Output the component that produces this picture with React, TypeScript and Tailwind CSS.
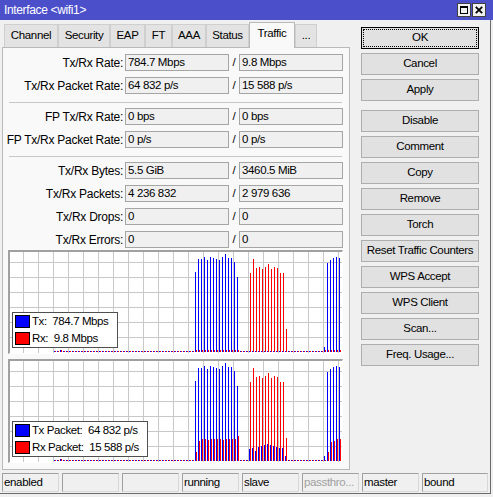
import React from "react";

const N = 96;

const fill = (v: number) => Array.from({ length: N }, () => v);
const put = (arr: number[], start: number, vals: number[]) => {
  vals.forEach((v, i) => (arr[start + i] = v));
  return arr;
};

// bar heights, one sample every 3px
const txTall = [80, 93, 93, 95, 92, 95, 94, 93, 92, 95, 98, 94, 94, 90, 75];
const rxTall = [79, 93, 84, 85, 83, 85, 88, 83, 85, 84, 79, 79, 23];
const txRight = [5, 89, 92, 94, 95, 94];

const rateTx = put(put(put(fill(1), 2, [2]), 47, txTall), 90, txRight);
const rateRx = put(put(put(put(fill(1), 2, [2]), 47, Array(15).fill(2)), 65, rxTall), 90, Array(6).fill(2));

const pktTx = put(put(put(put(fill(1), 2, [2]), 47, txTall), 65, [12, 13, 10, 14, 15, 16, 17, 16, 15, 14, 13, 13, 5]), 90, txRight);
const pktRx = put(
  put(
    put(put(fill(1), 2, [2]), 47, [9, 20, 22, 22, 21, 22, 22, 22, 22, 21, 22, 22, 22, 22, 25]),
    65,
    rxTall
  ),
  91,
  [9, 19, 20, 22, 22]
);

interface LegendRow {
  color: string;
  label: string;
  value: string;
}

function Chart({ tx, rx, legend, legendW }: { tx: number[]; rx: number[]; legend: LegendRow[]; legendW: string }) {
  return (
    <div className="ml-[5px] w-[335px] border-t-2 border-l-2 border-r border-b border-t-[#a0a0a0] border-l-[#a0a0a0] border-r-white border-b-white">
      <div className="relative w-[332px] h-[101px] bg-white">
        <svg width="332" height="101" className="block" shapeRendering="crispEdges">
          {Array.from({ length: 22 }, (_, n) => (
            <rect key={"v" + n} x={13 + 15 * n} y={0} width={1} height={101} fill="#c8c8c8" />
          ))}
          {[85, 70, 55, 40, 25, 10].map((y) => (
            <rect key={"h" + y} x={0} y={y} width={332} height={1} fill="#c8c8c8" />
          ))}
          {tx.map((h, k) => (
            <rect key={"t" + k} x={44 + 3 * k} y={100 - h} width={1} height={h} fill="#0000ff" />
          ))}
          {rx.map((h, k) => (
            <rect key={"r" + k} x={45 + 3 * k} y={100 - h} width={1} height={h} fill="#ff0000" />
          ))}
        </svg>
        <div className={`absolute left-[2px] bottom-[5px] ${legendW} border border-[#505050] bg-white px-[2px] py-[2px] flex flex-col gap-[4px]`}>
          {legend.map((r) => (
            <div key={r.label} className="flex items-center h-[13px]">
              <div className={`w-[15px] h-[13px] border border-black ${r.color}`} />
              <span className="ml-[2px] whitespace-pre text-[11.5px] tracking-[-0.4px]">{r.label + "  " + r.value}</span>
            </div>
          ))}
        </div>
      </div>
    </div>
  );
}

function Row({ label, a, b }: { label: string; a: string; b: string }) {
  return (
    <div className="flex items-center h-[17px]">
      <div className="w-[120px] text-right whitespace-nowrap text-[12px] tracking-[-0.25px]">{label}</div>
      <div className="ml-[2px] w-[104px] h-[17px] border border-[#a5a5a5] bg-[#f0f0f0] pl-[2px] flex items-center">{a}</div>
      <div className="w-[10px] text-center">/</div>
      <div className="w-[104px] h-[17px] border border-[#a5a5a5] bg-[#f0f0f0] pl-[2px] flex items-center">{b}</div>
    </div>
  );
}

const tabs = [
  { label: "Channel", w: "w-[54px]" },
  { label: "Security", w: "w-[52px]" },
  { label: "EAP", w: "w-[35px]" },
  { label: "FT", w: "w-[27px]" },
  { label: "AAA", w: "w-[34px]" },
  { label: "Status", w: "w-[43px]" },
  { label: "Traffic", w: "w-[46px]", active: true },
  { label: "...", w: "w-[22px]" },
];

const topButtons = ["OK", "Cancel", "Apply"];
const moreButtons = [
  "Disable",
  "Comment",
  "Copy",
  "Remove",
  "Torch",
  "Reset Traffic Counters",
  "WPS Accept",
  "WPS Client",
  "Scan...",
  "Freq. Usage...",
];

const status = [
  { t: "enabled", w: "w-[57px]" },
  { t: "", w: "w-[57px]" },
  { t: "", w: "w-[57px]" },
  { t: "running", w: "w-[57px]" },
  { t: "slave", w: "w-[57px]" },
  { t: "passthro...", w: "w-[57px]", dim: true },
  { t: "master", w: "w-[57px]" },
  { t: "bound", w: "w-[66px]" },
];

export default function App() {
  return (
    <div className="w-[493px] h-[497px] bg-[#f0f0f0] overflow-hidden font-['Liberation_Sans',Arial,sans-serif] text-[11.5px] tracking-[-0.35px] leading-none text-black">
      {/* Title bar */}
      <div className="h-[20px] bg-[#4b4fca] flex items-center justify-between pl-[4px] pr-[7px]">
        <span className="text-white text-[12px]">{"Interface <wifi1>"}</span>
        <div className="flex gap-[1px]">
          <div className="w-[14px] h-[14px] bg-[#f0f0f0] border border-[#404040] flex items-center justify-center">
            <svg width="8" height="8" viewBox="0 0 8 8" shapeRendering="crispEdges">
              <rect x="0.5" y="0.5" width="7" height="7" fill="none" stroke="#000" />
              <rect x="0" y="0" width="8" height="2" fill="#000" />
            </svg>
          </div>
          <div className="w-[14px] h-[14px] bg-[#f0f0f0] border border-[#404040] flex items-center justify-center">
            <svg width="8" height="8" viewBox="0 0 8 8">
              <path d="M0.8 0.8 L7.2 7.2 M7.2 0.8 L0.8 7.2" stroke="#000" strokeWidth="1.8" />
            </svg>
          </div>
        </div>
      </div>

      {/* Window body */}
      <div className="w-[491px] h-[474px] border-r border-b border-[#6b6b6b] flex flex-col">
        <div className="flex h-[450px]">
          {/* Left: tabs + panel */}
          <div className="ml-[2px] w-[348px] pt-[2px] flex flex-col">
            <div className="h-[25px] pl-[2px] flex items-end">
              {tabs.map((t) =>
                t.active ? (
                  <div
                    key={t.label}
                    className={`${t.w} h-[26px] -mb-px relative z-10 bg-[#f9f9f9] border-l border-t border-r border-[#b9b9b9] flex items-center justify-center pb-[3px]`}
                  >
                    {t.label}
                  </div>
                ) : (
                  <div
                    key={t.label}
                    className={`${t.w} h-[23px] bg-[#e3e3e3] border-l border-t border-r border-[#cfcfcf] flex items-center justify-center`}
                  >
                    {t.label}
                  </div>
                )
              )}
            </div>
            <div className="h-[423px] border border-[#b9b9b9] bg-[#f9f9f9] flex flex-col pt-[6px]">
              <Row label="Tx/Rx Rate:" a="784.7 Mbps" b="9.8 Mbps" />
              <div className="mt-[6px]">
                <Row label="Tx/Rx Packet Rate:" a="64 832 p/s" b="15 588 p/s" />
              </div>
              <div className="mt-[8px] ml-[6px] w-[333px] h-px bg-[#c8c8c8]" />
              <div className="mt-[5px]">
                <Row label="FP Tx/Rx Rate:" a="0 bps" b="0 bps" />
              </div>
              <div className="mt-[6px]">
                <Row label="FP Tx/Rx Packet Rate:" a="0 p/s" b="0 p/s" />
              </div>
              <div className="mt-[8px] ml-[6px] w-[333px] h-px bg-[#c8c8c8]" />
              <div className="mt-[5px] flex flex-col gap-[6px]">
                <Row label="Tx/Rx Bytes:" a="5.5 GiB" b="3460.5 MiB" />
                <Row label="Tx/Rx Packets:" a="4 236 832" b="2 979 636" />
                <Row label="Tx/Rx Drops:" a="0" b="0" />
                <Row label="Tx/Rx Errors:" a="0" b="0" />
              </div>
              <div className="mt-[2px]">
                <Chart
                  tx={rateTx}
                  rx={rateRx}
                  legendW="w-[106px]"
                  legend={[
                    { color: "bg-[#0000ff]", label: "Tx:", value: "784.7 Mbps" },
                    { color: "bg-[#ff0000]", label: "Rx:", value: "9.8 Mbps" },
                  ]}
                />
              </div>
              <div className="mt-[5px]">
                <Chart
                  tx={pktTx}
                  rx={pktRx}
                  legendW="w-[136px]"
                  legend={[
                    { color: "bg-[#0000ff]", label: "Tx Packet:", value: "64 832 p/s" },
                    { color: "bg-[#ff0000]", label: "Rx Packet:", value: "15 588 p/s" },
                  ]}
                />
              </div>
            </div>
          </div>

          {/* Right: buttons */}
          <div className="ml-[11px] w-[118px] pt-[7px] flex flex-col">
            <div className="flex flex-col gap-[4px]">
              {topButtons.map((b) => (
                <div
                  key={b}
                  className={
                    b === "OK"
                      ? "h-[22px] bg-[#e1e1e1] border border-black outline-1 outline-dotted outline-black outline-offset-[-3px] flex items-center justify-center"
                      : "h-[22px] bg-[#e1e1e1] border border-[#adadad] flex items-center justify-center"
                  }
                >
                  {b}
                </div>
              ))}
            </div>
            <div className="mt-[9px] flex flex-col gap-[4px]">
              {moreButtons.map((b) => (
                <div key={b} className="h-[22px] bg-[#e1e1e1] border border-[#adadad] flex items-center justify-center whitespace-nowrap">
                  {b}
                </div>
              ))}
            </div>
          </div>
        </div>

        {/* Status bar */}
        <div className="mt-[3px] pl-[2px] flex gap-[3px]">
          {status.map((s, i) => (
            <div
              key={i}
              className={`${s.w} h-[19px] border border-t-[#a0a0a0] border-l-[#a0a0a0] border-r-[#d8d8d8] border-b-[#d8d8d8] pl-[1px] flex items-center ${
                s.dim ? "text-[#a0a0a0]" : ""
              }`}
            >
              {s.t}
            </div>
          ))}
        </div>
      </div>
    </div>
  );
}
